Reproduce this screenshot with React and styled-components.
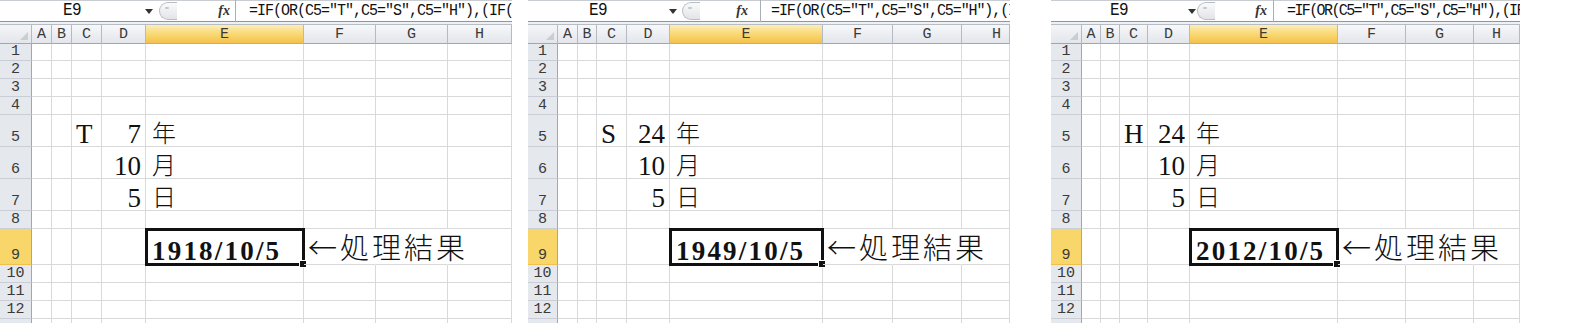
import React from 'react'
import styled, { createGlobalStyle, css } from 'styled-components'

const GlobalStyle = createGlobalStyle`
  html, body {
    margin: 0;
    padding: 0;
    background: #fff;
    overflow: hidden;
  }
`

const ROW_HEIGHTS = [17, 18, 18, 18, 32, 32, 32, 18, 36, 18, 18, 18, 18]
const COLS = ['A', 'B', 'C', 'D', 'E', 'F', 'G', 'H']
const FORMULA = '=IF(OR(C5="T",C5="S",C5="H"),(IF(C5="T",1911,IF(C5="S",1925,1988))+D5)&"/"&D6&"/"&D7,"")'

const panels = [
  {
    offset: 0,
    widths: [32, 20, 20, 30, 44, 158, 72, 72, 64],
    bar: { arrow: 149, pill: 159, line: 235, fx: 230, text: 13, tracking: -1 },
    era: 'T', year: '7', result: '1918/10/5',
  },
  {
    offset: 16,
    widths: [30, 20, 19, 30, 43, 153, 70, 69, 48],
    bar: { arrow: 145, pill: 154, line: 232, fx: 220, text: 10, tracking: -1.1 },
    era: 'S', year: '24', result: '1949/10/5',
  },
  {
    offset: 41,
    widths: [31, 19, 19, 28, 42, 148, 68, 68, 46],
    bar: { arrow: 141, pill: 146, line: 222, fx: 216, text: 13, tracking: -1.6 },
    era: 'H', year: '24', result: '2012/10/5',
  },
]

const Page = styled.div`
  display: flex;
  align-items: flex-start;
  background: #fff;
`

const Panel = styled.div`
  display: flex;
  flex-direction: column;
  margin-left: ${p => p.$offset}px;
  width: ${p => p.$width}px;
  flex-shrink: 0;
`

const FormulaBar = styled.div`
  display: grid;
  grid-template-columns: ${p => p.$cols};
  height: 20px;
  border-top: 1px solid #c9ccd1;
  border-bottom: 1px solid #8e959e;
  background: #fff;
  font-family: "Liberation Mono", "DejaVu Sans Mono", monospace;
  color: #111;
`

const NameBox = styled.div`
  display: flex;
  align-items: center;
  justify-content: center;
  font-size: 16px;
  letter-spacing: -0.5px;
  transform: scaleY(1.1);
`

const DropArrow = styled.div`
  display: flex;
  align-items: center;
  justify-content: center;
`

const Pill = styled.div`
  align-self: center;
  height: 16px;
  border: 1px solid #b9bec6;
  border-right: none;
  border-radius: 9px 0 0 9px;
  background: linear-gradient(#fafafa, #e2e4e8);
  position: relative;
  &::after {
    content: '';
    position: absolute;
    left: 5px;
    top: 4px;
    width: 4px;
    height: 2px;
    border-radius: 1px;
    background: #c4c8ce;
  }
`

const FxLabel = styled.div`
  display: flex;
  align-items: center;
  justify-content: flex-end;
  padding-right: ${p => p.$pad}px;
  font-family: "Liberation Serif", serif;
  font-style: italic;
  font-weight: bold;
  font-size: 14px;
  color: #333;
`

const FormulaInput = styled.div`
  display: flex;
  align-items: center;
  border-left: 1px solid #a9afb8;
  padding-left: ${p => p.$pad}px;
  overflow: hidden;
  white-space: nowrap;
  font-size: 15px;
  letter-spacing: ${p => p.$tracking}px;
  transform-origin: left center;
  transform: scaleY(1.12);
`

const Strip = styled.div`
  height: 2px;
  background: #eef0f3;
`

const Sheet = styled.div`
  display: grid;
  grid-template-columns: ${p => p.$cols};
  grid-template-rows: 20px ${ROW_HEIGHTS.map(h => `${h}px`).join(' ')};
`

const headerFont = css`
  font-family: "Liberation Mono", "DejaVu Sans Mono", monospace;
  font-size: 15px;
  color: #3a3a3a;
  box-sizing: border-box;
`

const Corner = styled.div`
  ${headerFont};
  position: relative;
  background: linear-gradient(#f4f5f7, #e3e6eb);
  border-top: 1px solid #b7bdc6;
  border-right: 1px solid #b3bac4;
  border-bottom: 1px solid #9ea7b3;
  &::after {
    content: '';
    position: absolute;
    right: 3px;
    bottom: 3px;
    border-left: 8px solid transparent;
    border-bottom: 8px solid #c9ced5;
  }
`

const ColHeader = styled.div`
  ${headerFont};
  display: flex;
  align-items: center;
  justify-content: ${p => (p.$edge ? 'flex-end' : 'center')};
  padding-right: ${p => (p.$edge ? 8 : 0)}px;
  overflow: hidden;
  border-top: 1px solid #b7bdc6;
  border-right: 1px solid #b3bac4;
  border-bottom: 1px solid #9ea7b3;
  background: ${p => (p.$active
    ? 'linear-gradient(#fdeeb4, #f8d46a 60%, #f3c14e)'
    : 'linear-gradient(#f7f8fa, #e2e5ea)')};
  ${p => p.$active && css`border-bottom-color: #e2a93a;`}
`

const RowHeader = styled.div`
  ${headerFont};
  display: flex;
  align-items: flex-end;
  justify-content: center;
  padding-bottom: 1px;
  line-height: 15px;
  background: ${p => (p.$active ? '#f9d669' : '#e5e8ed')};
  border-right: 1px solid #9ea7b3;
  border-bottom: 1px solid ${p => (p.$active ? '#f0c04c' : '#c9ced6')};
`

const Cell = styled.div`
  position: relative;
  display: flex;
  align-items: flex-end;
  justify-content: ${p => (p.$align === 'right' ? 'flex-end' : 'flex-start')};
  padding: 0 ${p => (p.$align === 'right' ? 4 : 0)}px 0 ${p => (p.$align === 'right' ? 0 : 4)}px;
  box-sizing: border-box;
  white-space: nowrap;
  border-right: 1px solid ${p => (p.$spill ? 'transparent' : '#d9d9d9')};
  border-bottom: 1px solid #d9d9d9;
  ${p => p.$selected && css`
    outline: 3px solid #111;
    outline-offset: -2px;
    z-index: 2;
    &::after {
      content: '';
      position: absolute;
      right: -4px;
      bottom: -4px;
      width: 6px;
      height: 6px;
      background: #111;
      border: 1px solid #fff;
    }
  `}
  ${p => p.$over && css`z-index: 3;`}
`

const textKinds = {
  latin: css`
    font-family: "Liberation Serif", serif;
    font-size: 27px;
    line-height: 23px;
  `,
  cjk: css`
    font-family: "Noto Sans CJK JP", "Noto Sans CJK SC", sans-serif;
    font-size: 24px;
    line-height: 29px;
    font-weight: 300;
    padding-left: 2px;
  `,
  result: css`
    font-family: "Liberation Serif", serif;
    font-weight: bold;
    font-size: 27px;
    line-height: 26px;
    letter-spacing: 2.2px;
    padding-left: 2px;
  `,
  note: css`
    font-family: "Noto Sans CJK JP", "Noto Sans CJK SC", sans-serif;
    font-size: 29px;
    font-weight: 300;
    line-height: 35px;
    letter-spacing: 3px;
  `,
}

const CellText = styled.span`
  color: #111;
  ${p => textKinds[p.$kind]};
`

function Arrow() {
  return (
    <svg width="8" height="5" viewBox="0 0 8 5">
      <path d="M0 0 H8 L4 5 Z" fill="#333" />
    </svg>
  )
}

function buildContent(panel) {
  return {
    '5-C': { kind: 'latin', text: panel.era },
    '5-D': { kind: 'latin', text: panel.year, align: 'right' },
    '5-E': { kind: 'cjk', text: '年' },
    '6-D': { kind: 'latin', text: '10', align: 'right' },
    '6-E': { kind: 'cjk', text: '月' },
    '7-D': { kind: 'latin', text: '5', align: 'right' },
    '7-E': { kind: 'cjk', text: '日' },
    '9-E': { kind: 'result', text: panel.result, selected: true },
    '9-F': { kind: 'note', text: '←処理結果', spill: true, over: true },
    '9-G': { spill: true },
  }
}

function SheetPanel({ panel }) {
  const { bar, widths } = panel
  const total = widths.reduce((a, b) => a + b, 0)
  const barCols = [
    `${bar.arrow - 5}px`,
    '10px',
    `${bar.pill - bar.arrow - 5}px`,
    '18px',
    `${bar.line - bar.pill - 18}px`,
    '1fr',
  ].join(' ')
  const content = buildContent(panel)

  return (
    <Panel $offset={panel.offset} $width={total}>
      <FormulaBar $cols={barCols}>
        <NameBox>E9</NameBox>
        <DropArrow><Arrow /></DropArrow>
        <div />
        <Pill />
        <FxLabel $pad={bar.line - bar.fx}>fx</FxLabel>
        <FormulaInput $pad={bar.text} $tracking={bar.tracking}>{FORMULA}</FormulaInput>
      </FormulaBar>
      <Strip />
      <Sheet $cols={widths.map(w => `${w}px`).join(' ')}>
        <Corner />
        {COLS.map((c, i) => (
          <ColHeader key={c} $active={c === 'E'} $edge={i === COLS.length - 1 && panel.offset === 16}>
            {c}
          </ColHeader>
        ))}
        {ROW_HEIGHTS.map((_, r) => {
          const row = r + 1
          // the last row is only a sliver at the bottom edge, its number is out of view
          const label = row < ROW_HEIGHTS.length ? row : ''
          return (
            <React.Fragment key={row}>
              <RowHeader $active={row === 9}>{label}</RowHeader>
              {COLS.map(c => {
                const item = content[`${row}-${c}`] || {}
                return (
                  <Cell
                    key={c}
                    $align={item.align}
                    $spill={item.spill}
                    $selected={item.selected}
                    $over={item.over}
                  >
                    {item.text && <CellText $kind={item.kind}>{item.text}</CellText>}
                  </Cell>
                )
              })}
            </React.Fragment>
          )
        })}
      </Sheet>
    </Panel>
  )
}

export default function App() {
  return (
    <>
      <GlobalStyle />
      <Page>
        {panels.map(p => (
          <SheetPanel key={p.result} panel={p} />
        ))}
      </Page>
    </>
  )
}
